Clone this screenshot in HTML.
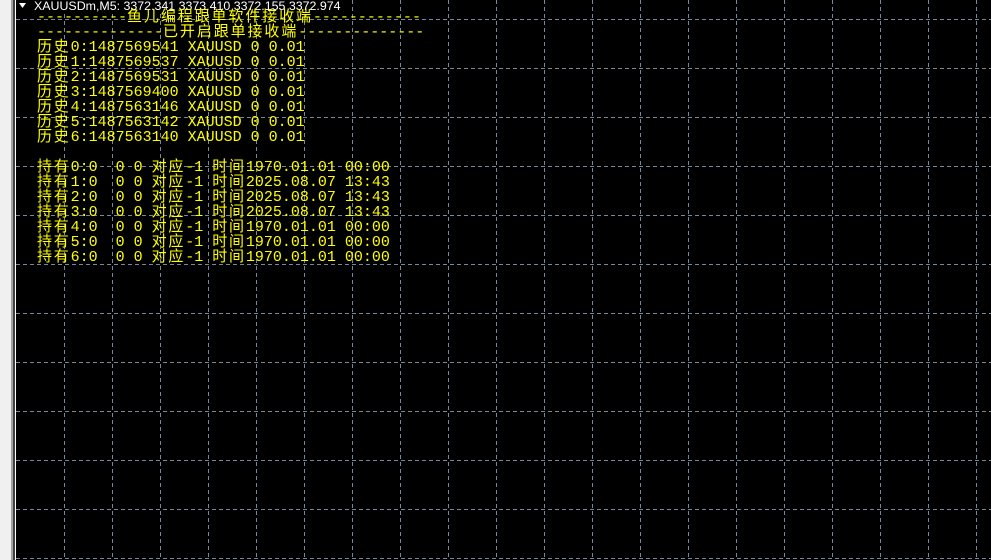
<!DOCTYPE html>
<html><head><meta charset="utf-8"><style>
html,body{margin:0;padding:0;}
body{width:991px;height:560px;background:#000;position:relative;overflow:hidden;}
.lp{position:absolute;left:0;top:0;width:11px;height:560px;background:#f0f0f0;}
.b1{position:absolute;left:11px;top:0;width:2px;height:560px;background:#a0a0a0;}
.b2{position:absolute;left:13px;top:0;width:2px;height:560px;background:#404040;}
.b3{position:absolute;left:15px;top:0;width:1px;height:560px;background:#fff;}
svg{position:absolute;left:0;top:0;}
.t{position:absolute;left:37px;color:#ffff00;font-family:"Liberation Mono","Noto Sans CJK SC",monospace;font-size:15px;line-height:15px;white-space:pre;}
.c{letter-spacing:1.8px;}
.h{letter-spacing:1.9px;}
.title{position:absolute;left:34px;top:0;color:#fff;font-family:"Liberation Sans",sans-serif;font-size:12.4px;line-height:13px;white-space:pre;}
</style></head><body>
<div class="lp"></div><div class="b1"></div><div class="b2"></div><div class="b3"></div>
<svg width="991" height="560">
<g stroke="#778899" stroke-width="1" stroke-dasharray="4 3">
<line x1="64.5" y1="0" x2="64.5" y2="560"/><line x1="112.5" y1="0" x2="112.5" y2="560"/><line x1="160.5" y1="0" x2="160.5" y2="560"/><line x1="208.5" y1="0" x2="208.5" y2="560"/><line x1="256.5" y1="0" x2="256.5" y2="560"/><line x1="304.5" y1="0" x2="304.5" y2="560"/><line x1="352.5" y1="0" x2="352.5" y2="560"/><line x1="400.5" y1="0" x2="400.5" y2="560"/><line x1="448.5" y1="0" x2="448.5" y2="560"/><line x1="496.5" y1="0" x2="496.5" y2="560"/><line x1="544.5" y1="0" x2="544.5" y2="560"/><line x1="592.5" y1="0" x2="592.5" y2="560"/><line x1="640.5" y1="0" x2="640.5" y2="560"/><line x1="688.5" y1="0" x2="688.5" y2="560"/><line x1="736.5" y1="0" x2="736.5" y2="560"/><line x1="784.5" y1="0" x2="784.5" y2="560"/><line x1="832.5" y1="0" x2="832.5" y2="560"/><line x1="880.5" y1="0" x2="880.5" y2="560"/><line x1="928.5" y1="0" x2="928.5" y2="560"/><line x1="976.5" y1="0" x2="976.5" y2="560"/>
<line x1="16" y1="19.5" x2="991" y2="19.5"/><line x1="16" y1="68.5" x2="991" y2="68.5"/><line x1="16" y1="117.5" x2="991" y2="117.5"/><line x1="16" y1="166.5" x2="991" y2="166.5"/><line x1="16" y1="215.5" x2="991" y2="215.5"/><line x1="16" y1="264.5" x2="991" y2="264.5"/><line x1="16" y1="313.5" x2="991" y2="313.5"/><line x1="16" y1="362.5" x2="991" y2="362.5"/><line x1="16" y1="411.5" x2="991" y2="411.5"/><line x1="16" y1="460.5" x2="991" y2="460.5"/><line x1="16" y1="509.5" x2="991" y2="509.5"/><line x1="16" y1="558.5" x2="991" y2="558.5"/>
</g>
<rect x="16" y="0" width="330" height="13" fill="#000"/>
<polygon points="19,3 26,3 22.5,8" fill="#fff"/>
</svg>
<div class="title">XAUUSDm,M5: 3372.341 3373.410 3372.155 3372.974</div>
<div class="t" style="top:10px;">----------<span class="h">鱼儿编程跟单软件接收端</span>------------
--------------<span class="h">已开启跟单接收端</span>--------------
<span class="c">历史</span>0:1487569541 XAUUSD 0 0.01
<span class="c">历史</span>1:1487569537 XAUUSD 0 0.01
<span class="c">历史</span>2:1487569531 XAUUSD 0 0.01
<span class="c">历史</span>3:1487569400 XAUUSD 0 0.01
<span class="c">历史</span>4:1487563146 XAUUSD 0 0.01
<span class="c">历史</span>5:1487563142 XAUUSD 0 0.01
<span class="c">历史</span>6:1487563140 XAUUSD 0 0.01

<span class="c">持有</span>0:0  0 0 <span class="c">对应</span>-1 <span class="c">时间</span>1970.01.01 00:00
<span class="c">持有</span>1:0  0 0 <span class="c">对应</span>-1 <span class="c">时间</span>2025.08.07 13:43
<span class="c">持有</span>2:0  0 0 <span class="c">对应</span>-1 <span class="c">时间</span>2025.08.07 13:43
<span class="c">持有</span>3:0  0 0 <span class="c">对应</span>-1 <span class="c">时间</span>2025.08.07 13:43
<span class="c">持有</span>4:0  0 0 <span class="c">对应</span>-1 <span class="c">时间</span>1970.01.01 00:00
<span class="c">持有</span>5:0  0 0 <span class="c">对应</span>-1 <span class="c">时间</span>1970.01.01 00:00
<span class="c">持有</span>6:0  0 0 <span class="c">对应</span>-1 <span class="c">时间</span>1970.01.01 00:00</div>
</body></html>
